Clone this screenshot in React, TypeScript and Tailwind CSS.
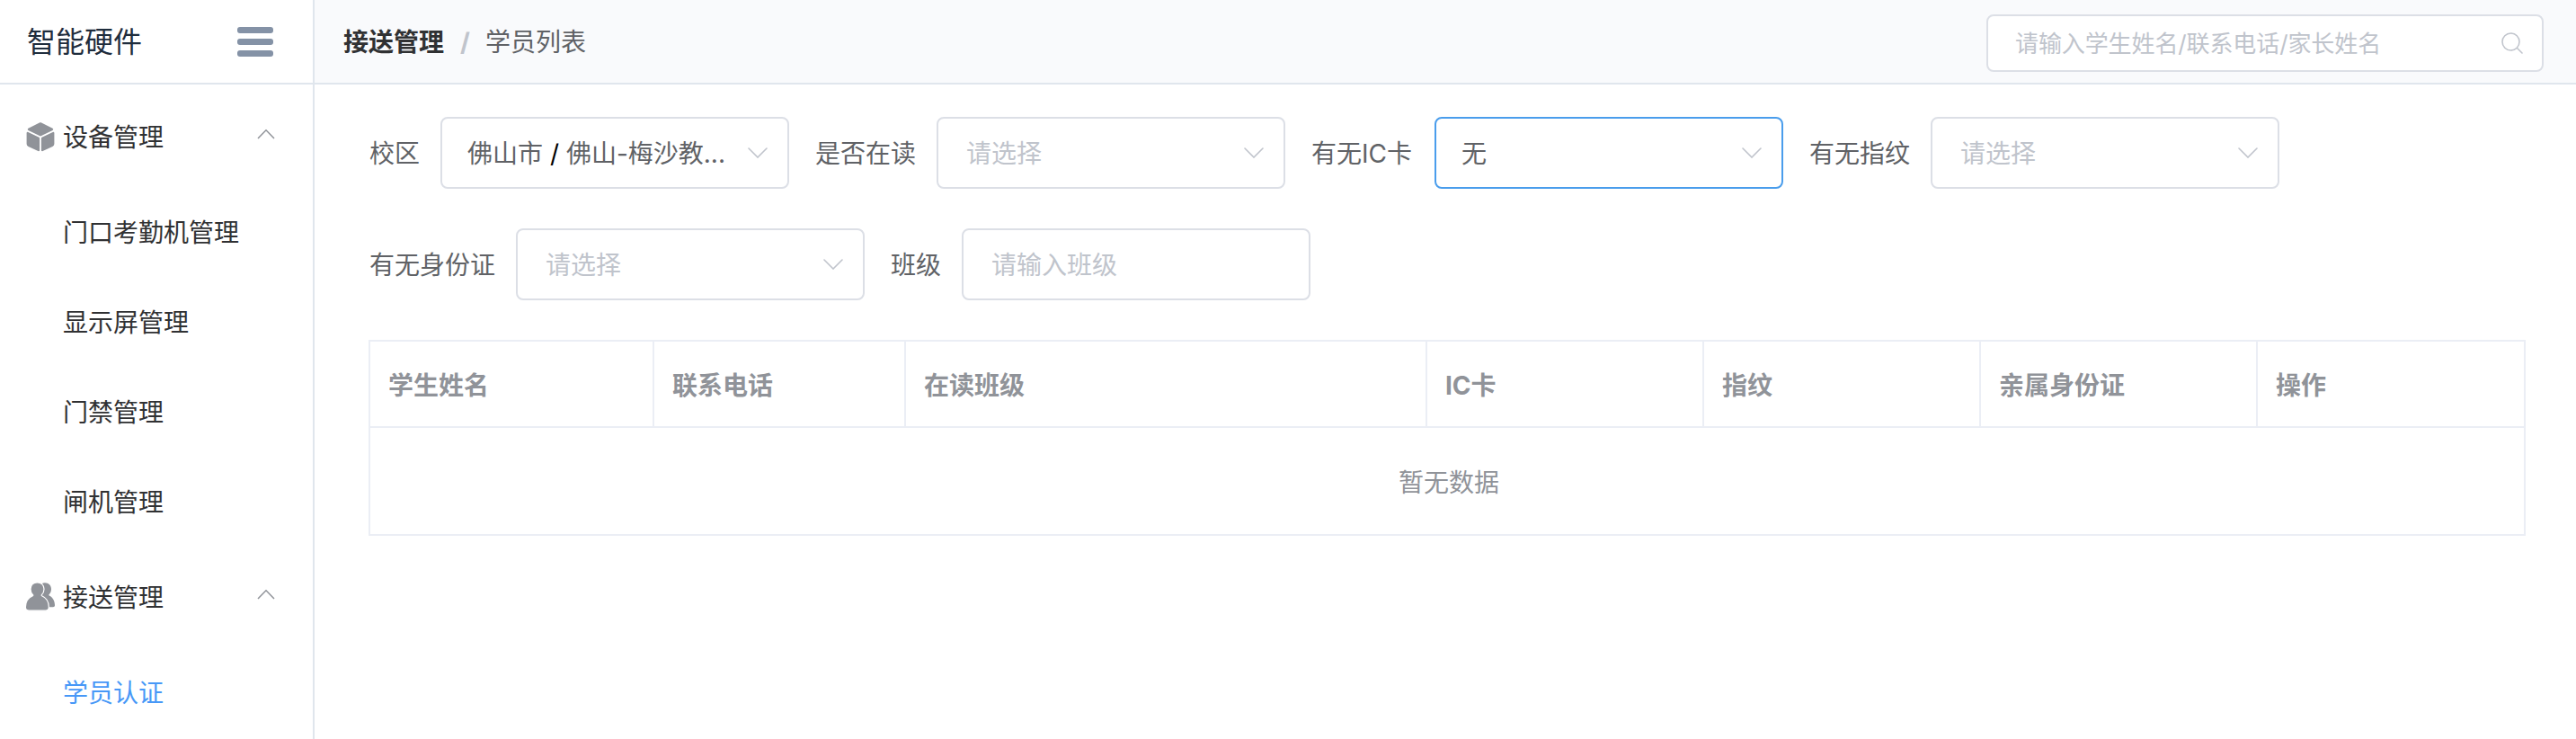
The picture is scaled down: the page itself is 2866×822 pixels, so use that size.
import React from "react";

const menu = [
  {
    title: "设备管理",
    icon: "box",
    items: ["门口考勤机管理", "显示屏管理", "门禁管理", "闸机管理"],
  },
  { title: "接送管理", icon: "users", items: ["学员认证"] },
];

const columns = [
  { label: "学生姓名", width: "w-[316px]" },
  { label: "联系电话", width: "w-[280px]" },
  { label: "在读班级", width: "w-[580px]" },
  { label: "IC卡", width: "w-[308px]" },
  { label: "指纹", width: "w-[308px]" },
  { label: "亲属身份证", width: "w-[308px]" },
  { label: "操作", width: "flex-1" },
];

function BoxIcon() {
  return (
    <svg className="h-[33px] w-8" viewBox="0 0 32 33" fill="#909399" stroke="#909399" strokeWidth="2.4" strokeLinejoin="round">
      <path d="M16 1.4 29 7.800 16 14.200 3 7.800Z" />
      <path d="M1.800 12 13.900 17.800V31L3 26Q1.800 25.400 1.800 24Z" />
      <path d="M30.200 12 18.100 17.800V31L29 26Q30.200 25.400 30.200 24Z" />
    </svg>
  );
}

function UsersIcon() {
  return (
    <svg className="h-8 w-8" viewBox="0 0 32 32" fill="#909399" stroke="#fff" strokeWidth="1.2">
      <path
        stroke="none"
        d="M21 .2c4.300 0 7 3 7 7 0 2.600-.9 4.600-2.400 6-.4.4-.3.900.2 1.200C29.700 16.500 32 20 32 25.300c0 1.300-.7 2-2 2h-8L15 16V5C16.200 2 18 .2 21 .2Z"
      />
      <path d="M12.500-.2c4.500 0 7.500 3.200 7.500 7.500 0 2.700-1 4.800-2.600 6.300-.4.400-.3.900.2 1.200 4.500 2 7.700 6 7.700 12.500 0 2.600-1.200 3.900-3.700 3.900H3.200C.700 31.200-.6 29.900-.6 27.300c0-6.500 3.400-10.500 8-12.500.5-.3.600-.8.200-1.200C6 12.100 5 10 5 7.300 5 3 8-.2 12.500-.2Z" />
    </svg>
  );
}

function ChevronUp() {
  return (
    <svg className="h-3 w-5" viewBox="0 0 20 12" fill="none" stroke="#909399" strokeWidth="1.5">
      <path d="M1 11 10 1.800 19 11" />
    </svg>
  );
}

function ChevronDown() {
  return (
    <svg className="h-3 w-[22px]" viewBox="0 0 22 12" fill="none" stroke="#c0c4cc" strokeWidth="1.6" strokeLinecap="round">
      <path d="M1 1 11 11 21 1" />
    </svg>
  );
}

type FieldProps = {
  label: string;
  labelWidth?: string;
  value?: React.ReactNode;
  placeholder?: string;
  select?: boolean;
  active?: boolean;
};

function Field({ label, labelWidth = "", value, placeholder, select = true, active }: FieldProps) {
  return (
    <div className="flex items-center">
      <span className={`mr-[23px] shrink-0 whitespace-nowrap pl-px pt-0.5 text-[#606266] ${labelWidth}`}>{label}</span>
      <div
        className={`flex h-20 w-[388px] items-center justify-between rounded-lg border-2 bg-white pl-7 pr-[22px] ${
          active ? "border-[#4a9dec]" : "border-[#dcdfe6]"
        }`}
      >
        {value ? (
          <span className="whitespace-nowrap pt-0.5 text-[#606266]">{value}</span>
        ) : (
          <span className="ml-[3px] whitespace-nowrap pt-0.5 text-[#c0c4cc]">{placeholder}</span>
        )}
        {select && <ChevronDown />}
      </div>
    </div>
  );
}

export default function App() {
  return (
    <div className="flex h-[822px] w-[2866px] overflow-hidden bg-white font-['Inter','Noto_Sans_CJK_SC',sans-serif] text-[28px] leading-10 text-[#303133]">
      <aside className="flex w-[350px] shrink-0 flex-col border-r-2 border-[#e0e6ed]">
        <div className="flex h-[94px] shrink-0 items-center justify-between border-b-2 border-[#e0e6ed] pl-[30px] pr-11">
          <span className="pt-0.5 text-[32px] text-[#1f2d3d]">智能硬件</span>
          <div className="flex flex-col gap-1.5">
            <i className="h-[7px] w-10 rounded-[3px] bg-[#8492a6]" />
            <i className="h-[7px] w-10 rounded-[3px] bg-[#8492a6]" />
            <i className="h-[7px] w-10 rounded-[3px] bg-[#8492a6]" />
          </div>
        </div>
        <nav className="pt-0.5">
          {menu.map((group) => (
            <div key={group.title}>
              <div className="flex h-28 items-center pl-[29px] pr-[42px]">
                {group.icon === "box" ? <BoxIcon /> : <UsersIcon />}
                <span className="ml-[9px] flex-1 pt-0.5">{group.title}</span>
                <span className="pb-1.5">
                  <ChevronUp />
                </span>
              </div>
              {group.items.map((item) => (
                <div
                  key={item}
                  className={`flex h-[100px] items-center pl-[70px] pt-px ${item === "学员认证" ? "text-[#4798f7]" : ""}`}
                >
                  {item}
                </div>
              ))}
            </div>
          ))}
        </nav>
      </aside>

      <main className="flex min-w-0 flex-1 flex-col">
        <header className="flex h-[94px] shrink-0 items-center justify-between border-b-2 border-[#e0e6ed] bg-[#f9fafc] pl-8 pr-9">
          <div className="flex items-center pt-0.5">
            <span className="font-bold">接送管理</span>
            <span className="ml-[18px] mr-[17px] w-[11px] text-center font-bold text-[#c0c4cc]">/</span>
            <span className="text-[#606266]">学员列表</span>
          </div>
          <div className="mt-1 flex h-16 w-[620px] items-center justify-between rounded-lg border-2 border-[#dcdfe6] bg-white pl-[30px] pr-[21px] text-[26px] text-[#c0c4cc]">
            <span className="pt-0.5 tracking-[-0.1px]">请输入学生姓名/联系电话/家长姓名</span>
            <svg className="h-6 w-6" viewBox="0 0 24 24" fill="none" stroke="#c0c4cc" strokeWidth="1.600" strokeLinecap="round">
              <circle cx="10.500" cy="10.500" r="9.500" />
              <path d="M17.500 17.500 23 23" />
            </svg>
          </div>
        </header>

        <section className="flex flex-col pl-[60px] pt-9">
          <div className="flex gap-7">
            <Field
              label="校区"
              value={
                <>
                  佛山市<span className="text-black"> / </span>佛山-梅沙教...
                </>
              }
            />
            <Field label="是否在读" placeholder="请选择" />
            <Field label="有无IC卡" labelWidth="w-[115px]" value="无" active />
            <Field label="有无指纹" placeholder="请选择" />
          </div>
          <div className="mt-11 flex gap-7">
            <Field label="有无身份证" placeholder="请选择" />
            <Field label="班级" placeholder="请输入班级" select={false} />
          </div>

          <div className="mt-11 w-[2400px] border-2 border-[#ebeef5] text-[#909399]">
            <div className="flex h-[96px] border-b-2 border-[#ebeef5]">
              {columns.map((col) => (
                <div
                  key={col.label}
                  className={`flex items-center border-r-2 border-[#ebeef5] pl-5 pt-[3px] font-bold last:border-r-0 ${col.width}`}
                >
                  {col.label}
                </div>
              ))}
            </div>
            <div className="flex h-[118px] items-center justify-center pl-1 pt-[3px]">暂无数据</div>
          </div>
        </section>
      </main>
    </div>
  );
}
